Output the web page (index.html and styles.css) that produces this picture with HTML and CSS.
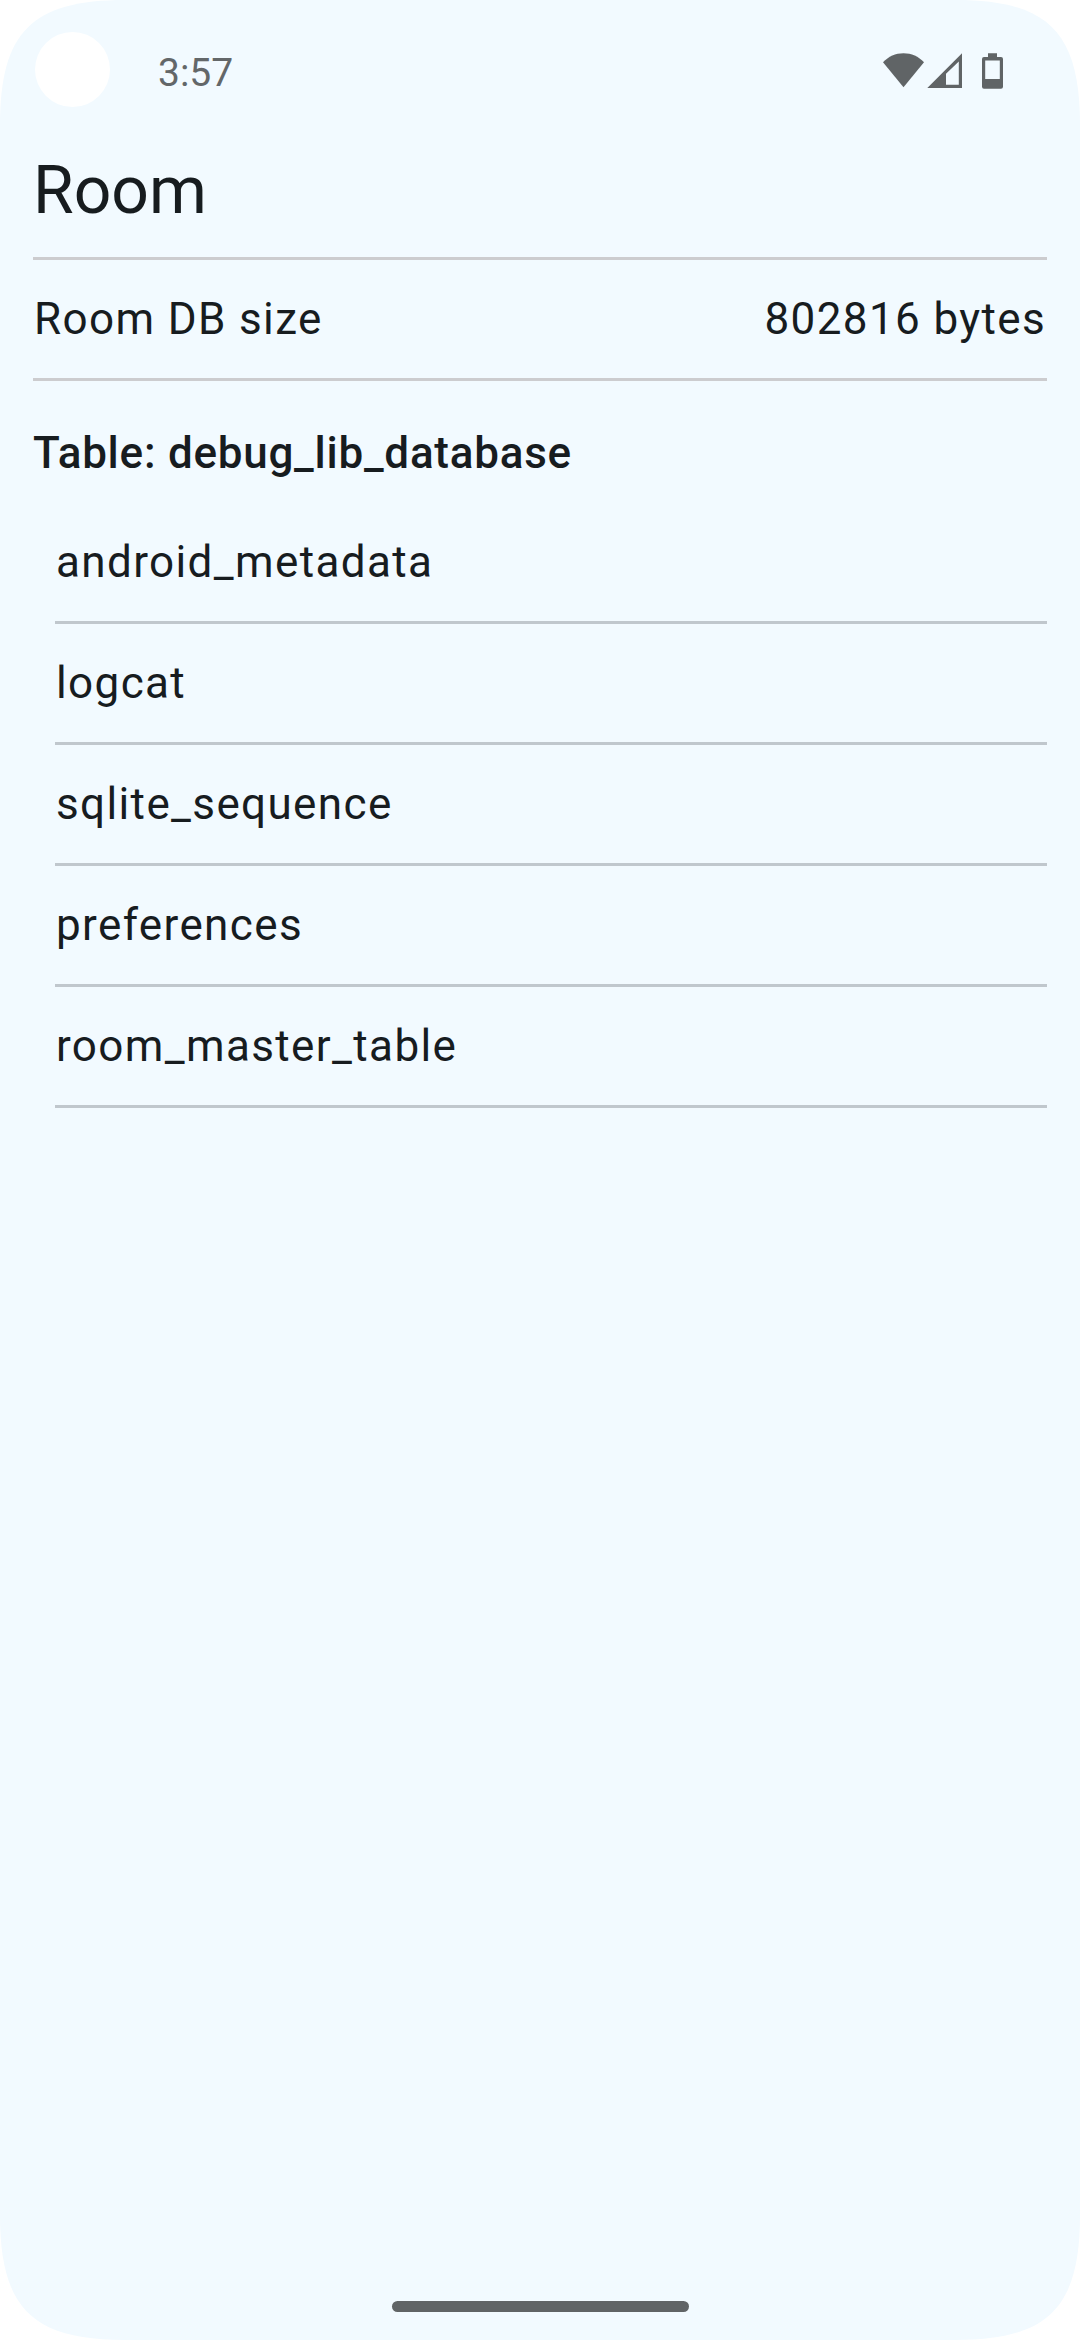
FILE: index.html
```html
<!DOCTYPE html>
<html lang="en">
<head>
<meta charset="utf-8">
<title>Room</title>
<link rel="stylesheet" href="styles.css">
</head>
<body>
<div class="screen">
  <header class="status-bar">
    <span class="camera"></span>
    <span class="clock">3:57</span>
    <svg class="status-icons" width="122" height="38" viewBox="882 52 122 38" aria-hidden="true">
      <path class="glyph" d="M903.5 87.3L883 62.3C888.500 56.500 895.500 53.300 903.500 53.300S918.500 56.500 924 62.300Z"/>
      <path class="glyph" fill-rule="evenodd" d="M927.300 88L962 53.300V88ZM946 73.700V84.800H958.800V61.600Z"/>
      <path class="glyph" fill-rule="evenodd" d="M988 53.300H997V57H1001Q1003 57 1003 59V86.700Q1003 88.700 1001 88.700H984Q982 88.700 982 86.700V59Q982 57 984 57H988ZM985.200 60.400V79H999.800V60.400Z"/>
    </svg>
  </header>
  <main class="content">
    <h1 class="title">Room</h1>
    <div class="size-row">
      <span>Room DB size</span>
      <span>802816 bytes</span>
    </div>
    <h2 class="table-heading">Table: debug_lib_database</h2>
    <ul class="table-list">
      <li>android_metadata</li>
      <li>logcat</li>
      <li>sqlite_sequence</li>
      <li>preferences</li>
      <li>room_master_table</li>
    </ul>
  </main>
  <footer class="nav-bar"><span class="handle"></span></footer>
</div>
</body>
</html>
```

FILE: styles.css
```css
* { box-sizing: border-box; }

body {
  margin: 0;
  background: #fff;
  color: #171c1f;
  font-family: Roboto, sans-serif;
}

.screen {
  display: flex;
  flex-direction: column;
  width: 1080px;
  height: 2340px;
  background: #f2faff;
  clip-path: path("M0 125C0 32 32 0 125 0H955C1048 0 1080 32 1080 125V2215C1080 2308 1048 2340 955 2340H125C32 2340 0 2308 0 2215Z");
}

.status-bar {
  display: flex;
  align-items: center;
  height: 140px;
  padding: 0 76px 0 35px;
}

.camera {
  width: 75px;
  height: 75px;
  margin-top: -1px;
  border-radius: 50%;
  background: #fff;
}

.clock {
  margin: 6px 0 0 48px;
  color: #636769;
  font-size: 39px;
  line-height: 46px;
}

.status-icons {
  margin-top: 2px;
  margin-left: auto;
}

.glyph { fill: #606466; }

.content {
  flex: 1;
  padding: 0 33px;
}

.title {
  height: 120px;
  margin: 0;
  padding-top: 7px;
  border-bottom: 3px solid #cccccf;
  font-size: 66px;
  font-weight: 400;
  line-height: 88px;
}

.size-row,
.table-list li {
  height: 121px;
  padding: 26px 0 0 1px;
  font-size: 44px;
  line-height: 66px;
  letter-spacing: 1.375px;
}

.size-row {
  display: flex;
  justify-content: space-between;
  padding-right: 1px;
  border-bottom: 3px solid #cccccf;
}

.table-heading {
  height: 122px;
  margin: 0;
  padding-top: 39px;
  font-size: 44px;
  font-weight: 500;
  line-height: 66px;
  letter-spacing: 0.74px;
}

.table-list {
  margin: 0;
  padding: 0 0 0 22px;
  list-style: none;
}

.table-list li { border-bottom: 3px solid #c0c7cd; }

.nav-bar {
  display: flex;
  justify-content: center;
  height: 39px;
}

.handle {
  width: 297px;
  height: 11px;
  border-radius: 6px;
  background: #606466;
}
```
